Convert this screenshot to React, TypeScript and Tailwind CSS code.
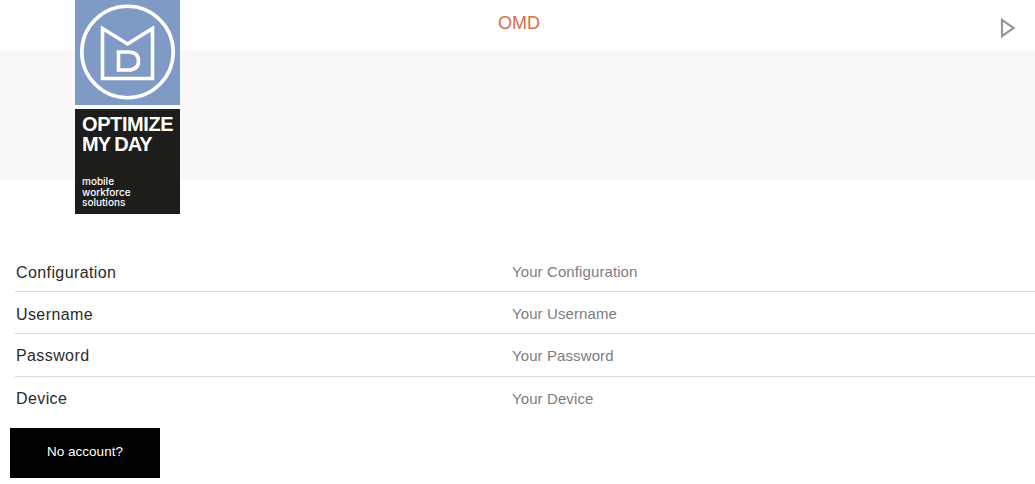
import React from "react";

const fields = [
  { label: "Configuration", placeholder: "Your Configuration", row: "h-[42px] border-b pt-[4px]" },
  { label: "Username", placeholder: "Your Username", row: "h-[42px] border-b pt-[4px]" },
  { label: "Password", placeholder: "Your Password", row: "h-[43px] border-b pt-[4px] pb-[2px]" },
  { label: "Device", placeholder: "Your Device", row: "h-[42px] pt-[2px]" },
];

function Logo() {
  return (
    <div className="absolute left-[75px] top-0 flex w-[105px] flex-col font-['Liberation_Sans',sans-serif]">
      <div className="h-[105px] bg-[#7f9bc5]">
        <svg viewBox="0 0 105 105" className="h-[105px] w-[105px]" fill="none" stroke="#fff">
          <circle cx="52.5" cy="52" r="45.7" strokeWidth="3.6" />
          <path d="M27.5 28.5 L52.5 44 L77.5 28.5 V78.5 H27.5 Z" strokeWidth="3.6" />
          <path d="M43.5 52 H53 Q63.5 52 63.5 61 Q63.5 70 53 70 H43.5 Z" strokeWidth="3.6" />
        </svg>
      </div>
      <div className="mt-[4px] flex h-[105px] flex-col bg-[#1d1d1b] pl-[7px] text-white">
        <div className="mt-[5px] text-[20px] leading-[20px] font-bold">
          <div className="tracking-[-0.4px]">OPTIMIZE</div>
          <div className="tracking-[-1px]">MY DAY</div>
        </div>
        <div className="mt-[22px] font-['Inter',sans-serif] text-[10px] leading-[10.7px] font-medium">
          mobile
          <br />
          workforce
          <br />
          solutions
        </div>
      </div>
    </div>
  );
}

export default function App() {
  return (
    <div className="relative min-h-[484px] bg-white font-['Liberation_Sans',sans-serif]">
      <header className="relative flex h-[50px] justify-center pl-[3px] pt-[13px]">
        <h1 className="text-[18px] leading-[20px] text-[#d2704a]">OMD</h1>
        <svg viewBox="0 0 16 20" className="absolute right-[19px] top-[18px] h-[20px] w-[16px]" fill="none">
          <path d="M2 1.8 L13.6 10 L2 18.2 Z" stroke="#97979f" strokeWidth="2.2" />
        </svg>
      </header>
      <div className="h-[130px] bg-[#f8f8f8]" />
      <Logo />
      <form className="mt-[70px] pl-[15px]">
        {fields.map((field) => (
          <div key={field.label} className={"flex items-center border-[#d9d9d9] " + field.row}>
            <label className="w-[497px] pl-px text-[16px] tracking-[0.4px] text-[#2a2a2a]">{field.label}</label>
            <span className="text-[15px] tracking-[0.1px] text-[#7d7d7d]">{field.placeholder}</span>
          </div>
        ))}
      </form>
      <button className="ml-[10px] mt-[9px] block h-[50px] w-[150px] bg-black pb-[2px] text-[13.5px] text-white">
        No account?
      </button>
    </div>
  );
}
